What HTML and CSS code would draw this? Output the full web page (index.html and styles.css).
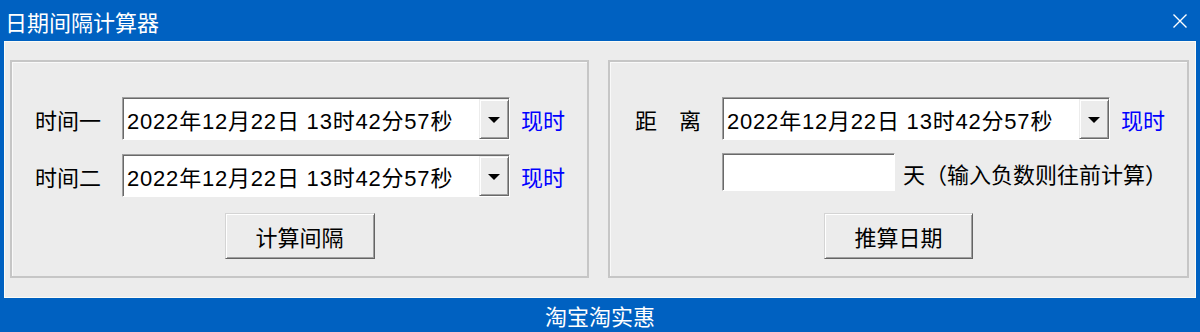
FILE: index.html
```html
<!DOCTYPE html>
<html lang="zh-CN">
<head>
<meta charset="utf-8">
<title>日期间隔计算器</title>
<link rel="stylesheet" href="styles.css">
</head>
<body>
<div class="window">
  <div class="titlebar">
    <span class="title">日期间隔计算器</span>
    <svg class="close" width="16" height="16" viewBox="0 0 16 16"><path d="M1.5 1.5 L14.5 14.5 M14.5 1.5 L1.5 14.5" stroke="#ffffff" stroke-width="1.4" fill="none"/></svg>
  </div>
  <div class="client">
    <div class="group group-left">
      <div class="row">
        <span class="label">时间一</span>
        <div class="combo"><span class="combo-text">2022年12月22日 13时42分57秒</span><span class="drop"><i class="tri"></i></span></div>
        <span class="link">现时</span>
      </div>
      <div class="row row-second">
        <span class="label">时间二</span>
        <div class="combo"><span class="combo-text">2022年12月22日 13时42分57秒</span><span class="drop"><i class="tri"></i></span></div>
        <span class="link">现时</span>
      </div>
      <div class="btn-row">
        <button class="btn">计算间隔</button>
      </div>
    </div>
    <div class="group group-right">
      <div class="row">
        <span class="label label-spaced">距　离</span>
        <div class="combo"><span class="combo-text">2022年12月22日 13时42分57秒</span><span class="drop"><i class="tri"></i></span></div>
        <span class="link">现时</span>
      </div>
      <div class="row row-second">
        <span class="label"></span>
        <div class="textbox"></div>
        <span class="hint">天（输入负数则往前计算）</span>
      </div>
      <div class="btn-row">
        <button class="btn btn-right">推算日期</button>
      </div>
    </div>
  </div>
  <div class="status">淘宝淘实惠</div>
</div>
</body>
</html>
```
FILE: styles.css
```css
* { box-sizing: border-box; }
html, body { margin: 0; padding: 0; }
body {
  width: 1200px;
  height: 332px;
  overflow: hidden;
  background: #0061c1;
  font-family: "Liberation Sans", "Noto Sans CJK SC", sans-serif;
}
.window {
  width: 1200px;
  height: 332px;
  display: flex;
  flex-direction: column;
  background: #0061c1;
}
.titlebar {
  height: 41px;
  display: flex;
  align-items: center;
  justify-content: space-between;
  padding: 0 12px 0 5px;
}
.title {
  color: #ffffff;
  font-family: "Noto Sans CJK SC", sans-serif;
  font-size: 22px;
  line-height: 1;
  margin-top: 1px;
}
.close { display: block; margin-top: 1px; }
.client {
  height: 257px;
  margin: 0 4px;
  background: #ececec;
  border: 1px solid #fbfbf6;
  padding: 18px 6px 0 5px;
  display: flex;
  gap: 19px;
}
.group {
  height: 218px;
  border: 2px solid #c6c6c6;
  box-shadow: inset 1px 1px 0 #f9f9f9;
  padding-top: 35px;
  display: flex;
  flex-direction: column;
}
.group-left { width: 579px; padding-left: 23px; }
.group-right { width: 581px; padding-left: 25px; }
.row {
  height: 43px;
  display: flex;
  align-items: center;
}
.row-second { margin-top: 14px; }
.label {
  width: 87px;
  flex: none;
  font-family: "Noto Sans CJK SC", sans-serif;
  font-size: 22px;
  line-height: 1;
  color: #000000;
}
.combo {
  width: 388px;
  height: 43px;
  flex: none;
  display: flex;
  align-items: stretch;
  background: #ffffff;
  border-top: 1px solid #a0a0a0;
  border-left: 1px solid #a0a0a0;
  border-bottom: 1px solid #ffffff;
  border-right: 1px solid #ffffff;
  box-shadow: inset 1px 1px 0 #696969;
  padding: 1px 0 0 1px;
}
.combo-text {
  flex: 1;
  display: flex;
  align-items: center;
  padding-left: 3px;
  font-size: 22px;
  letter-spacing: 0.8px;
  color: #000000;
  white-space: nowrap;
}
.drop {
  width: 30px;
  flex: none;
  background: #ececec;
  border-top: 1px solid #ececec;
  border-left: 1px solid #ececec;
  border-right: 1px solid #696969;
  border-bottom: 1px solid #696969;
  box-shadow: inset 1px 1px 0 #ffffff, inset -1px -1px 0 #a0a0a0;
  display: flex;
  align-items: center;
  justify-content: center;
}
.tri {
  display: block;
  width: 0;
  height: 0;
  border-left: 6px solid transparent;
  border-right: 6px solid transparent;
  border-top: 6px solid #000000;
  margin-top: 1px;
}
.link {
  margin-left: 11px;
  font-family: "Noto Sans CJK SC", sans-serif;
  font-size: 22px;
  line-height: 1;
  color: #0000ff;
}
.textbox {
  width: 173px;
  height: 38px;
  flex: none;
  align-self: flex-start;
  margin-top: -1px;
  background: #ffffff;
  border-top: 1px solid #a0a0a0;
  border-left: 1px solid #a0a0a0;
  border-bottom: 1px solid #ffffff;
  border-right: 1px solid #ffffff;
  box-shadow: inset 1px 1px 0 #696969;
}
.hint {
  margin-left: 8px;
  margin-top: -6px;
  font-family: "Noto Sans CJK SC", sans-serif;
  font-size: 22px;
  line-height: 1;
  color: #000000;
  white-space: nowrap;
}
.btn-row {
  margin-top: 16px;
  display: flex;
  justify-content: center;
}
.group-left .btn-row { margin-left: -23px; }
.group-right .btn-row { margin-left: -25px; }
.btn {
  width: 150px;
  height: 46px;
  margin: 0;
  padding: 0;
  background: #ececec;
  border-top: 1px solid #d4d4d4;
  border-left: 1px solid #d4d4d4;
  border-right: 1px solid #646464;
  border-bottom: 1px solid #646464;
  box-shadow: inset 1px 1px 0 #ffffff, inset -1px -1px 0 #a0a0a0;
  font-family: "Noto Sans CJK SC", sans-serif;
  font-size: 22px;
  line-height: 1;
  color: #000000;
}
.btn-right { width: 149px; }
.status {
  height: 34px;
  display: flex;
  align-items: center;
  justify-content: center;
  color: #ffffff;
  font-family: "Noto Sans CJK SC", sans-serif;
  font-size: 22px;
  line-height: 1;
}
```
